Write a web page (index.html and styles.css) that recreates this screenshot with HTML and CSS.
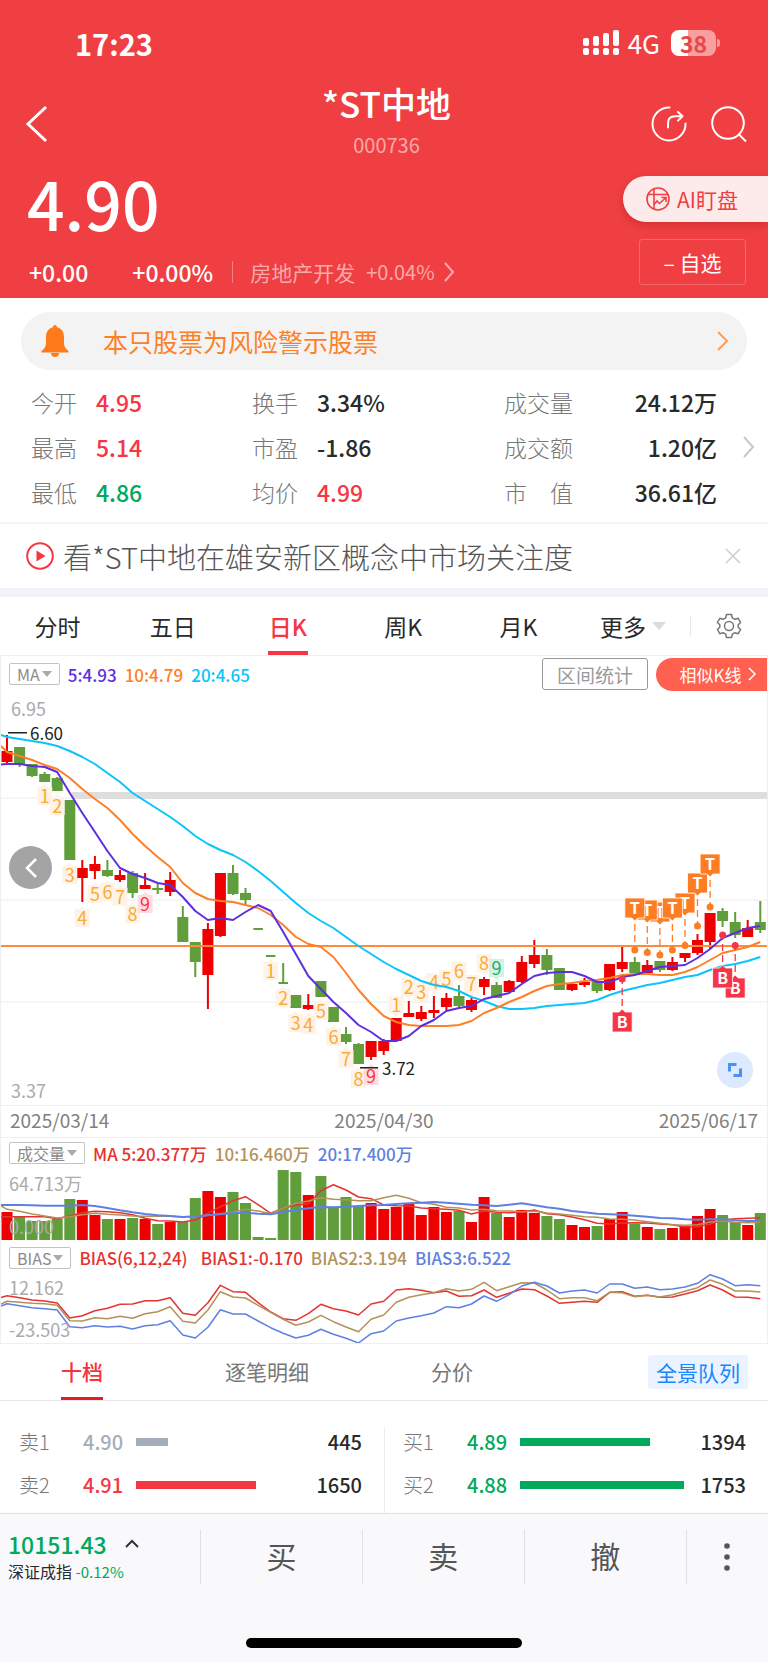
FILE: index.html
```html
<!DOCTYPE html>
<html lang="zh-CN">
<head>
<meta charset="utf-8">
<meta name="viewport" content="width=device-width, initial-scale=1">
<title>*ST中地 000736</title>
<link rel="stylesheet" href="styles.css">
</head>
<body>
<header class="hero">
  <div class="status">
    <span class="status-time">17:23</span>
    <div class="status-right">
      <svg class="signal" viewBox="0 0 36 26" width="36" height="26" fill="#fff" aria-hidden="true">
        <rect x="0" y="8" width="6" height="8" rx="2"/><rect x="10" y="6" width="6" height="10" rx="2"/><rect x="20" y="3" width="6" height="13" rx="2"/><rect x="30" y="0" width="6" height="16" rx="2"/>
        <rect x="0" y="18" width="6" height="7" rx="2"/><rect x="10" y="18" width="6" height="7" rx="2"/><rect x="20" y="18" width="6" height="7" rx="2"/><rect x="30" y="18" width="6" height="7" rx="2"/>
      </svg>
      <span class="network">4G</span>
      <span class="battery">38</span>
    </div>
  </div>
  <div class="titlebar">
    <button class="icon-btn" aria-label="返回"><svg viewBox="0 0 24 40" width="24" height="40" fill="none" stroke="#fff" stroke-width="3"><path d="M21 3 3 20l18 17"/></svg></button>
    <div class="title"><h1>*ST中地</h1><p>000736</p></div>
    <div class="title-actions">
      <button class="icon-btn" aria-label="分享"><svg viewBox="0 0 38 38" width="38" height="38" fill="none" stroke="#fff" stroke-width="2" stroke-linecap="round" stroke-linejoin="round"><path d="M19.500 2.500A16.500 16.500 0 1 0 35.500 18.500"/><path d="M18 22.500v-4c0-4.500 2.500-7.200 7-7.200h7M28 7l4.500 4.300L28 15.600"/></svg></button>
      <button class="icon-btn" aria-label="搜索"><svg viewBox="0 0 38 38" width="38" height="38" fill="none" stroke="#fff" stroke-width="2"><circle cx="18" cy="18" r="15.800"/><path d="m28.500 29 7.500 7.500"/></svg></button>
    </div>
  </div>
  <div class="quote">
    <div class="quote-main">
      <div class="price">4.90</div>
      <div class="change">
        <span class="chg">+0.00</span><span class="pct">+0.00%</span>
        <a class="sector" href="#"><span>房地产开发</span><span class="sector-pct">+0.04%</span><svg viewBox="0 0 12 20" width="12" height="20" fill="none" stroke="currentColor" stroke-width="2"><path d="m2 1 8 9-8 9"/></svg></a>
      </div>
    </div>
    <div class="quote-side">
      <button class="ai-btn"><svg viewBox="0 0 24 24" width="24" height="24" fill="none" stroke="#ef3f42" stroke-width="1.600"><circle cx="12" cy="12" r="11"/><path d="M8 2v20M1.500 7.500h21M8.500 17l2.500-3 2.500 2.500 6-5.500M15.500 10.500h4.500V15"/></svg>AI盯盘</button>
      <button class="fav-btn">– 自选</button>
    </div>
  </div>
</header>

<a class="notice" href="#">
  <svg viewBox="0 0 28 32" width="28" height="32" fill="#ff7a1a"><path d="M14 0c1.300 0 2 1 2 2.300C20.500 3.300 23 7 23 12v6c0 4 2 6 4.500 8v1.500H.5V26C3 24 5 22 5 18v-6C5 7 7.500 3.300 12 2.300 12 1 12.700 0 14 0Z"/><path d="M10 28h8c0 2-1.500 4-4 4s-4-2-4-4Z"/></svg>
  <span>本只股票为风险警示股票</span>
  <svg viewBox="0 0 12 20" width="12" height="20" fill="none" stroke="#ff9d55" stroke-width="2"><path d="m1 1 9 9-9 9"/></svg>
</a>

<section class="stats">
  <dl class="stat-col">
    <div><dt>今开</dt><dd class="up">4.95</dd></div><div><dt>最高</dt><dd class="up">5.14</dd></div><div><dt>最低</dt><dd class="down">4.86</dd></div>
  </dl>
  <dl class="stat-col">
    <div><dt>换手</dt><dd>3.34%</dd></div><div><dt>市盈</dt><dd>-1.86</dd></div><div><dt>均价</dt><dd class="up">4.99</dd></div>
  </dl>
  <dl class="stat-col stat-wide">
    <div><dt>成交量</dt><dd>24.12万</dd></div><div><dt>成交额</dt><dd>1.20亿</dd></div><div><dt>市　值</dt><dd>36.61亿</dd></div>
  </dl>
  <button class="icon-btn" aria-label="更多指标"><svg viewBox="0 0 12 22" width="12" height="22" fill="none" stroke="#c8c8c8" stroke-width="2"><path d="m1 1 9 10-9 10"/></svg></button>
</section>

<div class="promo">
  <svg viewBox="0 0 28 28" width="28" height="28"><circle cx="14" cy="14" r="12.800" fill="none" stroke="#f73644" stroke-width="2"/><path d="M10.500 8.500v11l9-5.500Z" fill="#f73644"/></svg>
  <a href="#">看*ST中地在雄安新区概念中市场关注度</a>
  <button class="icon-btn" aria-label="关闭"><svg viewBox="0 0 16 16" width="16" height="16" stroke="#ccc" stroke-width="1.500"><path d="m1 1 14 14M15 1 1 15"/></svg></button>
</div>

<nav class="periods">
  <div class="period-tabs">
    <button>分时</button><button>五日</button><button class="active">日K</button><button>周K</button><button>月K</button>
  </div>
  <button class="more">更多<i class="tri"></i></button>
  <button class="icon-btn gear" aria-label="设置"><svg viewBox="0 0 26 26" width="26" height="26" fill="none" stroke="#777" stroke-width="1.500" stroke-linejoin="round"><path d="M10.500 1.500h5l.8 3.300 2.600 1.500 3.300-1 2.400 4.200-2.400 2.300v2.400l2.400 2.300-2.400 4.200-3.300-1-2.600 1.500-.8 3.300h-5l-.8-3.300-2.600-1.500-3.300 1-2.400-4.200 2.400-2.300v-2.400L1.400 9.500l2.400-4.200 3.300 1 2.600-1.500Z"/><circle cx="13" cy="13" r="4.500"/></svg></button>
</nav>

<section class="charts">
  <div class="legend legend-main">
    <button class="pick">MA<i class="tri"></i></button>
    <span class="c-violet">5:4.93</span><span class="c-orange">10:4.79</span><span class="c-cyan">20:4.65</span>
    <button class="range-btn">区间统计</button>
    <button class="similar-btn">相似K线<svg viewBox="0 0 8 14" width="8" height="14" fill="none" stroke="#fff" stroke-width="1.500"><path d="m1 1 6 6-6 6"/></svg></button>
  </div>
  <div class="plot">
    <svg id="price" viewBox="1 692 766 413"></svg>
    <button class="prev" aria-label="向前"><svg viewBox="0 0 12 20" width="12" height="20" fill="none" stroke="#fff" stroke-width="2.500"><path d="m11 1-9 9 9 9"/></svg></button>
    <button class="expand" aria-label="全屏"><svg viewBox="0 0 14 14" width="14" height="14" fill="none" stroke="#4a90f7" stroke-width="3"><path d="M1.500 8.500v-7h7M12.500 5.500v7h-7"/></svg></button>
  </div>
  <div class="dates"><span>2025/03/14</span><span>2025/04/30</span><span>2025/06/17</span></div>
  <div class="legend">
    <button class="pick">成交量<i class="tri"></i></button>
    <span class="c-red">MA 5:20.377万</span><span class="c-tan">10:16.460万</span><span class="c-blue">20:17.400万</span>
  </div>
  <svg id="volume" viewBox="1 1168 766 73"></svg>
  <div class="legend legend-bias">
    <button class="pick">BIAS<i class="tri"></i></button>
    <span class="c-red gap">BIAS(6,12,24)</span><span class="c-red">BIAS1:-0.170</span><span class="c-tan">BIAS2:3.194</span><span class="c-blue">BIAS3:6.522</span>
  </div>
  <svg id="bias" viewBox="1 1271 766 72"></svg>
</section>

<nav class="book-tabs">
  <button class="active">十档</button><button>逐笔明细</button><button>分价</button>
  <button class="queue-btn">全景队列</button>
</nav>

<section class="book">
  <div class="side">
    <div class="level"><span>卖1</span><b class="flat">4.90</b><div class="track"><i class="bg-flat" style="width:19.5%"></i></div><em>445</em></div>
    <div class="level"><span>卖2</span><b class="up">4.91</b><div class="track"><i class="bg-up" style="width:73%"></i></div><em>1650</em></div>
  </div>
  <div class="side">
    <div class="level"><span>买1</span><b class="down">4.89</b><div class="track"><i class="bg-down" style="width:79%"></i></div><em>1394</em></div>
    <div class="level"><span>买2</span><b class="down">4.88</b><div class="track"><i class="bg-down" style="width:100%"></i></div><em>1753</em></div>
  </div>
</section>

<footer class="bottom">
  <div class="actions">
    <button class="index">
      <span class="index-val">10151.43<svg viewBox="0 0 14 9" width="14" height="9" fill="none" stroke="#333" stroke-width="2"><path d="m1 8 6-6 6 6"/></svg></span>
      <span class="index-name">深证成指 <small>-0.12%</small></span>
    </button>
    <button class="act">买</button><button class="act">卖</button><button class="act">撤</button>
    <button class="dots" aria-label="更多"><svg viewBox="0 0 6 28" width="6" height="28" fill="#555"><circle cx="3" cy="3" r="2.800"/><circle cx="3" cy="14" r="2.800"/><circle cx="3" cy="25" r="2.800"/></svg></button>
  </div>
  <div class="home"></div>
</footer>
<script src="charts.js"></script>
</body>
</html>
```

FILE: styles.css
```css
* { box-sizing: border-box; margin: 0; padding: 0; }
body { font-family: "Noto Sans CJK SC", "Noto Sans", sans-serif; background: #fff; color: #2a2a2a; }
button { font: inherit; color: inherit; background: none; border: 0; display: flex; align-items: center; justify-content: center; white-space: nowrap; }
a { color: inherit; text-decoration: none; }
svg { display: block; flex: none; }
em, i { font-style: normal; }
.up { color: #f73644; }
.down { color: #00a95c; }
.flat { color: #a4adb8; }
.c-violet { color: #5e2fe0; }
.c-orange { color: #ff7f27; }
.c-cyan { color: #0ac4fa; }
.c-red { color: #e5332f; }
.c-tan { color: #b3925a; }
.c-blue { color: #5f80e0; }

.hero { background: #f03f42; color: #fff; }
.status { display: flex; justify-content: space-between; align-items: center; height: 86px; padding: 0 52px 0 75px; }
.status-time { font-size: 29px; font-weight: 700; }
.status-right { display: flex; align-items: center; }
.network { margin-left: 9px; font-size: 26px; line-height: 30px; }
.battery { position: relative; margin-left: 11px; width: 45px; height: 26px; line-height: 26px; border-radius: 8px; background: linear-gradient(90deg, #fff 17px, #f89fa0 17px); color: #e8474a; font-size: 23px; font-weight: 700; text-align: center; }
.battery::after { content: ""; position: absolute; right: -4px; top: 9px; width: 3px; height: 8px; border-radius: 0 3px 3px 0; background: #f89fa0; }
.titlebar { display: grid; grid-template-columns: 1fr auto 1fr; align-items: center; height: 76px; padding: 0 20px 0 25px; }
.titlebar > .icon-btn { justify-self: start; }
.title { text-align: center; }
.title h1 { font-size: 35px; line-height: 32px; font-weight: 500; }
.title p { margin-top: 10px; font-size: 20px; line-height: 32px; color: #f9a9aa; }
.title-actions { justify-self: end; display: flex; gap: 22px; }
.quote { display: flex; justify-content: space-between; }
.price { font-size: 66px; line-height: 80px; font-weight: 500; padding-left: 27px; }
.change { display: flex; align-items: center; padding: 4px 0 0 29px; height: 56px; font-size: 23px; font-weight: 500; }
.pct { margin-left: 44px; }
.sector { display: flex; align-items: center; margin-left: 19px; padding-left: 17px; font-weight: 400; font-size: 21px; line-height: 22px; border-left: 1px solid #f58082; color: #f9a9aa; }
.sector-pct { margin: 0 8px 0 11px; font-size: 20px; }
.quote-side { display: flex; flex-direction: column; align-items: flex-end; padding-top: 14px; gap: 17px; }
.ai-btn { gap: 7px; width: 145px; height: 46px; padding-right: 7px; border-radius: 23px 0 0 23px; background: #fdebec; color: #ef3f42; font-size: 21px; box-shadow: 0 3px 8px rgba(120, 0, 0, .25); }
.fav-btn { width: 107px; height: 46px; margin-right: 22px; border: 1px solid #f5696b; border-radius: 3px; font-size: 21px; }

.notice { display: flex; align-items: center; height: 58px; margin: 14px 21px 11px; padding: 0 18px 0 20px; border-radius: 29px; background: #f3f3f3; color: #ff7f27; font-size: 25px; }
.notice span { flex: 1; padding-left: 34px; }

.stats { display: flex; align-items: center; height: 143px; padding: 0 13px 10px 31px; border-bottom: 2px solid #f3f4f8; }
.stat-col { width: 221px; }
.stat-col:nth-child(2) { width: 252px; }
.stat-col div { display: flex; align-items: center; height: 45px; }
.stat-col dt { width: 65px; font-size: 23px; font-weight: 300; color: #777; }
.stat-col dd { font-size: 23px; font-weight: 500; }
.stats .stat-wide { flex: 1; width: auto; }
.stat-wide dt { width: auto; }
.stat-wide div { justify-content: space-between; }
.stats .icon-btn { margin-left: 26px; }

.promo { display: flex; align-items: center; height: 73px; padding: 0 27px 0 26px; border-bottom: 9px solid #f2f3f9; font-size: 29px; color: #555; }
.promo a { flex: 1; margin-left: 9px; font-weight: 300; }

.periods { display: flex; height: 59px; font-size: 23px; border-bottom: 1px solid #f0f0f2; }
.period-tabs { display: flex; flex: 0 0 75%; }
.period-tabs button { flex: 1; }
.periods .active { position: relative; color: #f73644; font-weight: 500; }
.periods .active::after { content: ""; position: absolute; bottom: 0; left: 50%; width: 40px; height: 4px; margin-left: -20px; background: #f73644; }
.tri { display: inline-block; border: 5px solid transparent; border-top: 6px solid #aaa; border-bottom: 0; margin-left: 2px; }
.more { flex: 1; }
.more .tri { border-width: 8px 7px 0; border-top-color: #d9dbe2; margin-left: 6px; }
.gear { flex: 0 0 78px; background: linear-gradient(#e6e6ea, #e6e6ea) 0 50% / 1px 20px no-repeat; }

.charts { border: 1px solid #efefef; border-width: 0 1px 1px; }
.charts > svg, .plot > svg { width: 100%; height: auto; }
.legend { display: flex; align-items: center; height: 30px; padding-left: 8px; gap: 8px; font-size: 17px; font-weight: 500; white-space: nowrap; }
.legend-bias { padding-top: 3px; }
.legend .gap { margin-right: 5px; }
.legend-main { height: 36px; }
.pick { height: 22px; padding: 0 7px; border: 1px solid #c4c4c4; border-radius: 2px; color: #8a8a8a; font-size: 16px; font-weight: 400; }
.range-btn { width: 106px; height: 32px; margin-left: auto; border: 1px solid #999; border-radius: 3px; color: #999; font-size: 19px; font-weight: 400; }
.similar-btn { gap: 7px; width: 111px; height: 33px; padding-left: 13px; border-radius: 17px 0 0 17px; background: #ff604f; color: #fff; font-size: 17px; font-weight: 400; }
.plot { position: relative; }
.prev, .expand { position: absolute; border-radius: 50%; }
.prev { left: 8px; top: 154px; width: 43px; height: 43px; background: #a4a4a4; }
.expand { right: 14px; bottom: 17px; width: 36px; height: 36px; background: #dce9fe; }
.dates { display: flex; justify-content: space-between; align-items: center; height: 33px; padding: 0 9px 4px; border: solid #efefef; border-width: 1px 0; font-size: 19px; color: #808080; }
.label { font-size: 18px; fill: #aaa; }
.extreme { font-size: 17px; fill: #222; }
.count { font-size: 18px; text-anchor: middle; }
.mark { font-size: 16px; font-weight: 700; fill: #fff; text-anchor: middle; }
.line { fill: none; stroke-width: 2; stroke-linejoin: round; }
.thin { stroke-width: 1.5; }

.book-tabs { display: flex; align-items: center; height: 57px; padding: 0 20px 0 61px; border-bottom: 1px solid #e6e6e9; font-size: 21px; color: #777; }
.book-tabs button { height: 56px; padding-bottom: 2px; }
.book-tabs button:nth-child(2) { margin: 0 122px; }
.book-tabs .active { color: #f4333c; font-weight: 500; border-bottom: 3px solid #e51c23; padding: 1px 0 0; }
.book-tabs .queue-btn { width: 100px; height: 34px; margin-left: auto; padding: 0; border-radius: 3px; background: #eaf3ff; color: #1786ff; }
.book { display: flex; padding-top: 26px; }
.side { flex: 1; height: 86px; padding: 0 22px 0 19px; }
.side + .side { border-left: 1px solid #ececec; padding-left: 18px; }
.level { display: flex; align-items: center; height: 29px; margin-bottom: 14px; font-size: 20px; }
.level span { width: 64px; color: #777; font-weight: 300; }
.level b { width: 53px; font-weight: 500; }
.level em { width: 62px; font-weight: 500; text-align: right; }
.track { flex: 1; }
.track i { display: block; height: 8px; }
.bg-flat { background: #a4adb8; }
.bg-up { background: #f73644; }
.bg-down { background: #00a95c; }

.bottom { border-top: 1px solid #dedfe5; background: #f9f9fc; padding-bottom: 14px; }
.actions { display: flex; align-items: center; height: 86px; }
.actions button { height: 54px; }
.actions .index { flex: 0 0 200px; flex-direction: column; align-items: flex-start; padding-left: 8px; }
.index-val { display: flex; align-items: center; gap: 18px; color: #00a95c; font-size: 23px; line-height: 28px; font-weight: 500; }
.index-name { font-size: 16px; line-height: 26px; }
.index-name small { font-size: 15px; color: #00a95c; }
.actions .act { flex: 162; padding-bottom: 4px; border-left: 1px solid #dfdfe4; font-size: 30px; color: #555; }
.dots { flex: 82; }
.actions .dots { border-left: 1px solid #dfdfe4; }
.home { width: 36%; height: 10px; margin: 38px auto 0; border-radius: 5px; background: #000; }
```

FILE: charts.js
```js
const RED = '#ee0000', GREEN = '#5f9e3a';
const START = 7, STEP = 12.555;
const cx = i => START + STEP * i;
const r1 = v => Math.round(v * 10) / 10;
const rect = (x, y, w, h, fill) => `<rect x="${r1(x)}" y="${r1(y)}" width="${r1(w)}" height="${r1(h)}" fill="${fill}"/>`;
const text = (x, y, s, cls, extra = '') => `<text x="${x}" y="${y}" class="${cls}" ${extra}>${s}</text>`;
const rule = y => `<path d="M1 ${y}H767" stroke="#ececec"/>`;
const line = (ys, color, cls, first) =>
  `<polyline class="line ${cls}" stroke="${color}" points="1,${r1(first)} ${ys.map((y, i) => r1(cx(i)) + ',' + r1(y)).join(' ')}"/>`;

// colour, high, low, body top, body bottom
const candles = `r735,763,751,762 g747,767,747,764 g764,777,764,776 g772,782,774,782 g777,791,778,791 g800,860,800,860
r860,902,868,878 r856,879,864,871 g860,877,870,876 r870,882,875,880 g871,898,873,893 r873,889,885,889 g884,894,888,890
r872,896,880,892 g906,942,917,942 g942,977,942,962 r923,1009,929,975 r873,937,873,936 g865,895,873,894 g888,904,893,900
g928,930,928,930 g955,957,955,957 g963,983,982,984 g995,1008,995,1008 r994,1010,1005,1009 g981,997,981,997
g1007,1022,1007,1022 g1027,1044,1034,1042 g1043,1064,1044,1064 r1041,1060,1041,1057 r1039,1055,1041,1051
r1018,1041,1018,1041 r1001,1017,1013,1017 r1006,1021,1012,1019 r996,1018,1010,1013 r993,1011,998,1007 g985,1007,996,1006
r998,1012,1000,1010 r977,995,979,987 g982,998,985,998 r980,992,981,992 r956,983,962,982 r940,968,955,964 g949,975,955,970
g968,990,968,990 r982,991,984,990 r978,987,982,985 g980,993,981,991 r964,991,964,990 r946,972,962,969 g957,973,962,973
r960,973,965,973 g961,972,961,970 r957,971,962,970 r953,962,953,958 r934,955,940,953 r913,949,913,942 g908,927,911,921
g912,938,922,935 r920,937,928,937 g901,933,922,930`.split(/\s+/).map(s => [s[0], ...s.slice(1).split(',').map(Number)]);

const ma5 = [764,764,766,767,772,793,813,832,851,868,874,878,883,885,897,911,920,918,920,912,905,911,932,954,976,989,1002,1013,1025,1032,1041,1041,1036,1026,1020,1011,1008,1006,999,996,993,984,976,973,972,972,976,982,982,977,975,971,967,966,965,958,949,938,933,928,926];
const ma10 = [752,756,760,765,769,778,789,799,808,820,834,846,857,867,883,893,899,901,902,905,908,915,925,937,944,947,957,973,990,1004,1016,1022,1025,1026,1026,1026,1025,1021,1013,1008,1002,997,991,986,984,983,981,980,978,975,974,974,975,975,972,967,960,953,950,947,942];
const ma20 = [737,739,741,743,746,751,757,764,773,782,793,801,809,817,826,836,844,850,855,862,871,881,892,903,913,921,928,937,946,954,962,969,975,981,985,987,991,997,1001,1006,1009,1009,1008,1006,1005,1004,1003,1000,995,991,988,985,983,980,977,975,970,966,964,961,957];

let svg = rule(798) + rule(900) + rule(1002) + rect(72, 792, 695, 7, '#dedede');
candles.forEach(([c, hi, lo, top, bot], i) => {
  const color = c === 'r' ? RED : GREEN, x = cx(i);
  const w = i === 20 || i === 21 || i === 22 ? 9.5 : 11;
  svg += rect(x - 1, hi, 2, lo - hi, color) + rect(x - w / 2, top, w, bot - top, color);
});
svg += rect(1, 945, 766, 2, '#ff8a3c');

// running count tags: candle index, digit centre y, digit
const counts = [[3,796,1],[4,806,2],[5,875,3],[6,918,4],[7,894,5],[8,892,6],[9,897,7],[10,914,8],[11,904,9,'p'],
  [21,971,1],[22,998,2],[23,1023,3],[24,1025,4],[25,1011,5],[26,1037,6],[27,1059,7],[28,1079,8],[29,1076,9,'p'],
  [31,1005,1],[32,987,2],[33,992,3],[34,982,4],[35,979,5],[36,971,6],[37,984,7],[38,963,8],[39,968,9,'g']];
const tones = { p: ['#fddde1', '#f73644'], g: ['#d5f1e5', '#1fad70'], d: ['#fef3e6', '#fbab33'] };
counts.forEach(([i, y, n, tone = 'd']) => {
  const [bg, fg] = tones[tone], x = r1(cx(i));
  svg += rect(x - 7.5, y - 9, 15, 18, bg);
  svg += i < 30 ? `<path d="M${x - 3} ${y - 9}l3-3 3 3z" fill="${bg}"/>` : `<path d="M${x - 3} ${y + 9}l3 3 3-3z" fill="${bg}"/>`;
  svg += text(x, y + 7, n, 'count', `fill="${fg}"`);
});
svg += line(ma20, '#0ac4fa', '', 735) + line(ma10, '#ff7f27', '', 746) + line(ma5, '#5e2fe0', '', 764.5);

// trade marks: candle index, tag centre y, dot y
const mark = (i, y, dot, letter) => {
  const x = r1(cx(i)), sell = letter === 'T', fill = sell ? '#ff7d22' : '#f73548';
  const top = y - 10, bottom = y + 10;
  const box = sell
    ? `M${x - 10} ${top}h20v20h-7l-3 3-3-3h-7z`
    : `M${x - 10} ${bottom}h20v-20h-7l-3-3-3 3h-7z`;
  return `<path d="M${x} ${sell ? y + 16 : y - 16}V${dot}" stroke="${fill}" stroke-width="1.3" stroke-dasharray="7 4"/>
    <circle cx="${x}" cy="${dot}" r="3.5" fill="${fill}"/>
    <path d="${box}" fill="${fill}" stroke="#fff" stroke-width=".8"/>`
    + text(x, y + 6, letter, 'mark');
};
[[52,912,955],[54,903,945.5],[53,908,950],[51,910,952.5],[50,908,950],[55,883,926],[56,864,907]].forEach(m => svg += mark(...m, 'T'));
[[49,1022,979],[58,988,945.5],[57,978,935]].forEach(m => svg += mark(...m, 'B'));
svg += text(11, 716, '6.95', 'label') + text(11, 1098, '3.37', 'label');
svg += rect(8, 732, 19, 1.5, '#222') + text(30, 740, '6.60', 'extreme');
svg += rect(360, 1067, 18, 1.5, '#222') + text(382, 1075, '3.72', 'extreme');
document.getElementById('price').innerHTML = svg;

// bar tops, one per candle
const volumes = [1212,1217,1221,1221,1219,1199,1200,1215,1219,1219,1218,1219,1224,1222,1222,1198,1191,1197,1192,1203,1237,1238,1170,1172,1195,1176,1207,1197,1206,1203,1209,1207,1204,1215,1207,1212,1211,1222,1197,1213,1217,1210,1213,1216,1219,1225,1227,1226,1219,1212,1224,1227,1229,1228,1226,1216,1209,1215,1222,1225,1213];
// indicator lines are stored in thirds of a unit below 1090
const third = a => a.map(v => 1090 + v / 3);
const vol5 = third([380,380,380,380,386,378,368,364,365,368,374,385,392,393,396,390,370,350,332,320,344,370,355,345,341,302,284,300,321,326,345,347,348,354,356,358,361,372,363,367,368,366,360,371,374,381,389,400,402,399,398,399,402,404,411,410,402,390,386,385,383]);
const vol10 = third([358,364,372,378,384,380,374,370,373,375,378,379,379,379,381,380,376,371,366,358,363,371,355,340,333,323,328,329,332,332,323,316,325,338,343,352,354,360,358,362,363,365,364,369,372,376,380,382,387,388,390,395,400,404,406,404,396,393,397,398,397]);
const vol20 = third([345,345,346,347,347,347,345,348,354,361,367,372,376,378,381,379,376,373,369,368,371,373,366,360,355,351,352,350,348,346,345,342,340,338,336,338,341,344,346,348,344,340,346,352,356,363,367,371,373,374,377,380,384,385,388,389,388,388,391,393,392]);
let vol = '';
volumes.forEach((y, i) => { vol += rect(cx(i) - 5.5, y, 11, 1240 - y, candles[i][0] === 'r' ? RED : GREEN); });
vol += line(vol5, '#e5332f', 'thin', 1217) + line(vol10, '#b3925a', 'thin', 1206) + line(vol20, '#5f80e0', '', 1205);
vol += text(9, 1191, '64.713万', 'label') + text(9, 1234, '0.000', 'label');
document.getElementById('volume').innerHTML = vol;

const bias1 = third([617,623,630,633,639,684,677,662,655,643,642,632,632,623,670,676,638,586,605,607,638,666,686,691,671,643,656,663,675,642,634,600,596,601,608,603,619,617,600,622,610,597,599,618,640,637,634,637,607,605,619,616,622,621,612,602,585,600,621,622,626]);
const bias2 = third([634,637,640,641,646,692,693,683,686,679,685,671,665,650,694,699,660,605,621,624,646,667,688,706,696,676,695,711,725,688,675,637,622,614,608,596,603,598,577,602,590,578,579,600,626,623,623,632,607,608,620,616,621,614,604,593,570,583,603,603,606]);
const bias3 = third([641,647,653,656,660,710,713,707,711,709,717,707,704,692,735,744,712,659,672,672,693,713,730,744,736,718,733,745,759,731,723,693,684,677,669,650,653,642,618,634,614,588,577,588,609,603,600,609,582,582,595,591,599,597,591,580,554,567,587,584,587]);
document.getElementById('bias').innerHTML =
  line(bias1, '#e5332f', 'thin', 1297.5) + line(bias2, '#b3925a', 'thin', 1304) + line(bias3, '#5f80e0', 'thin', 1306)
  + text(9, 1295, '12.162', 'label') + text(9, 1337, '-23.503', 'label');
```
